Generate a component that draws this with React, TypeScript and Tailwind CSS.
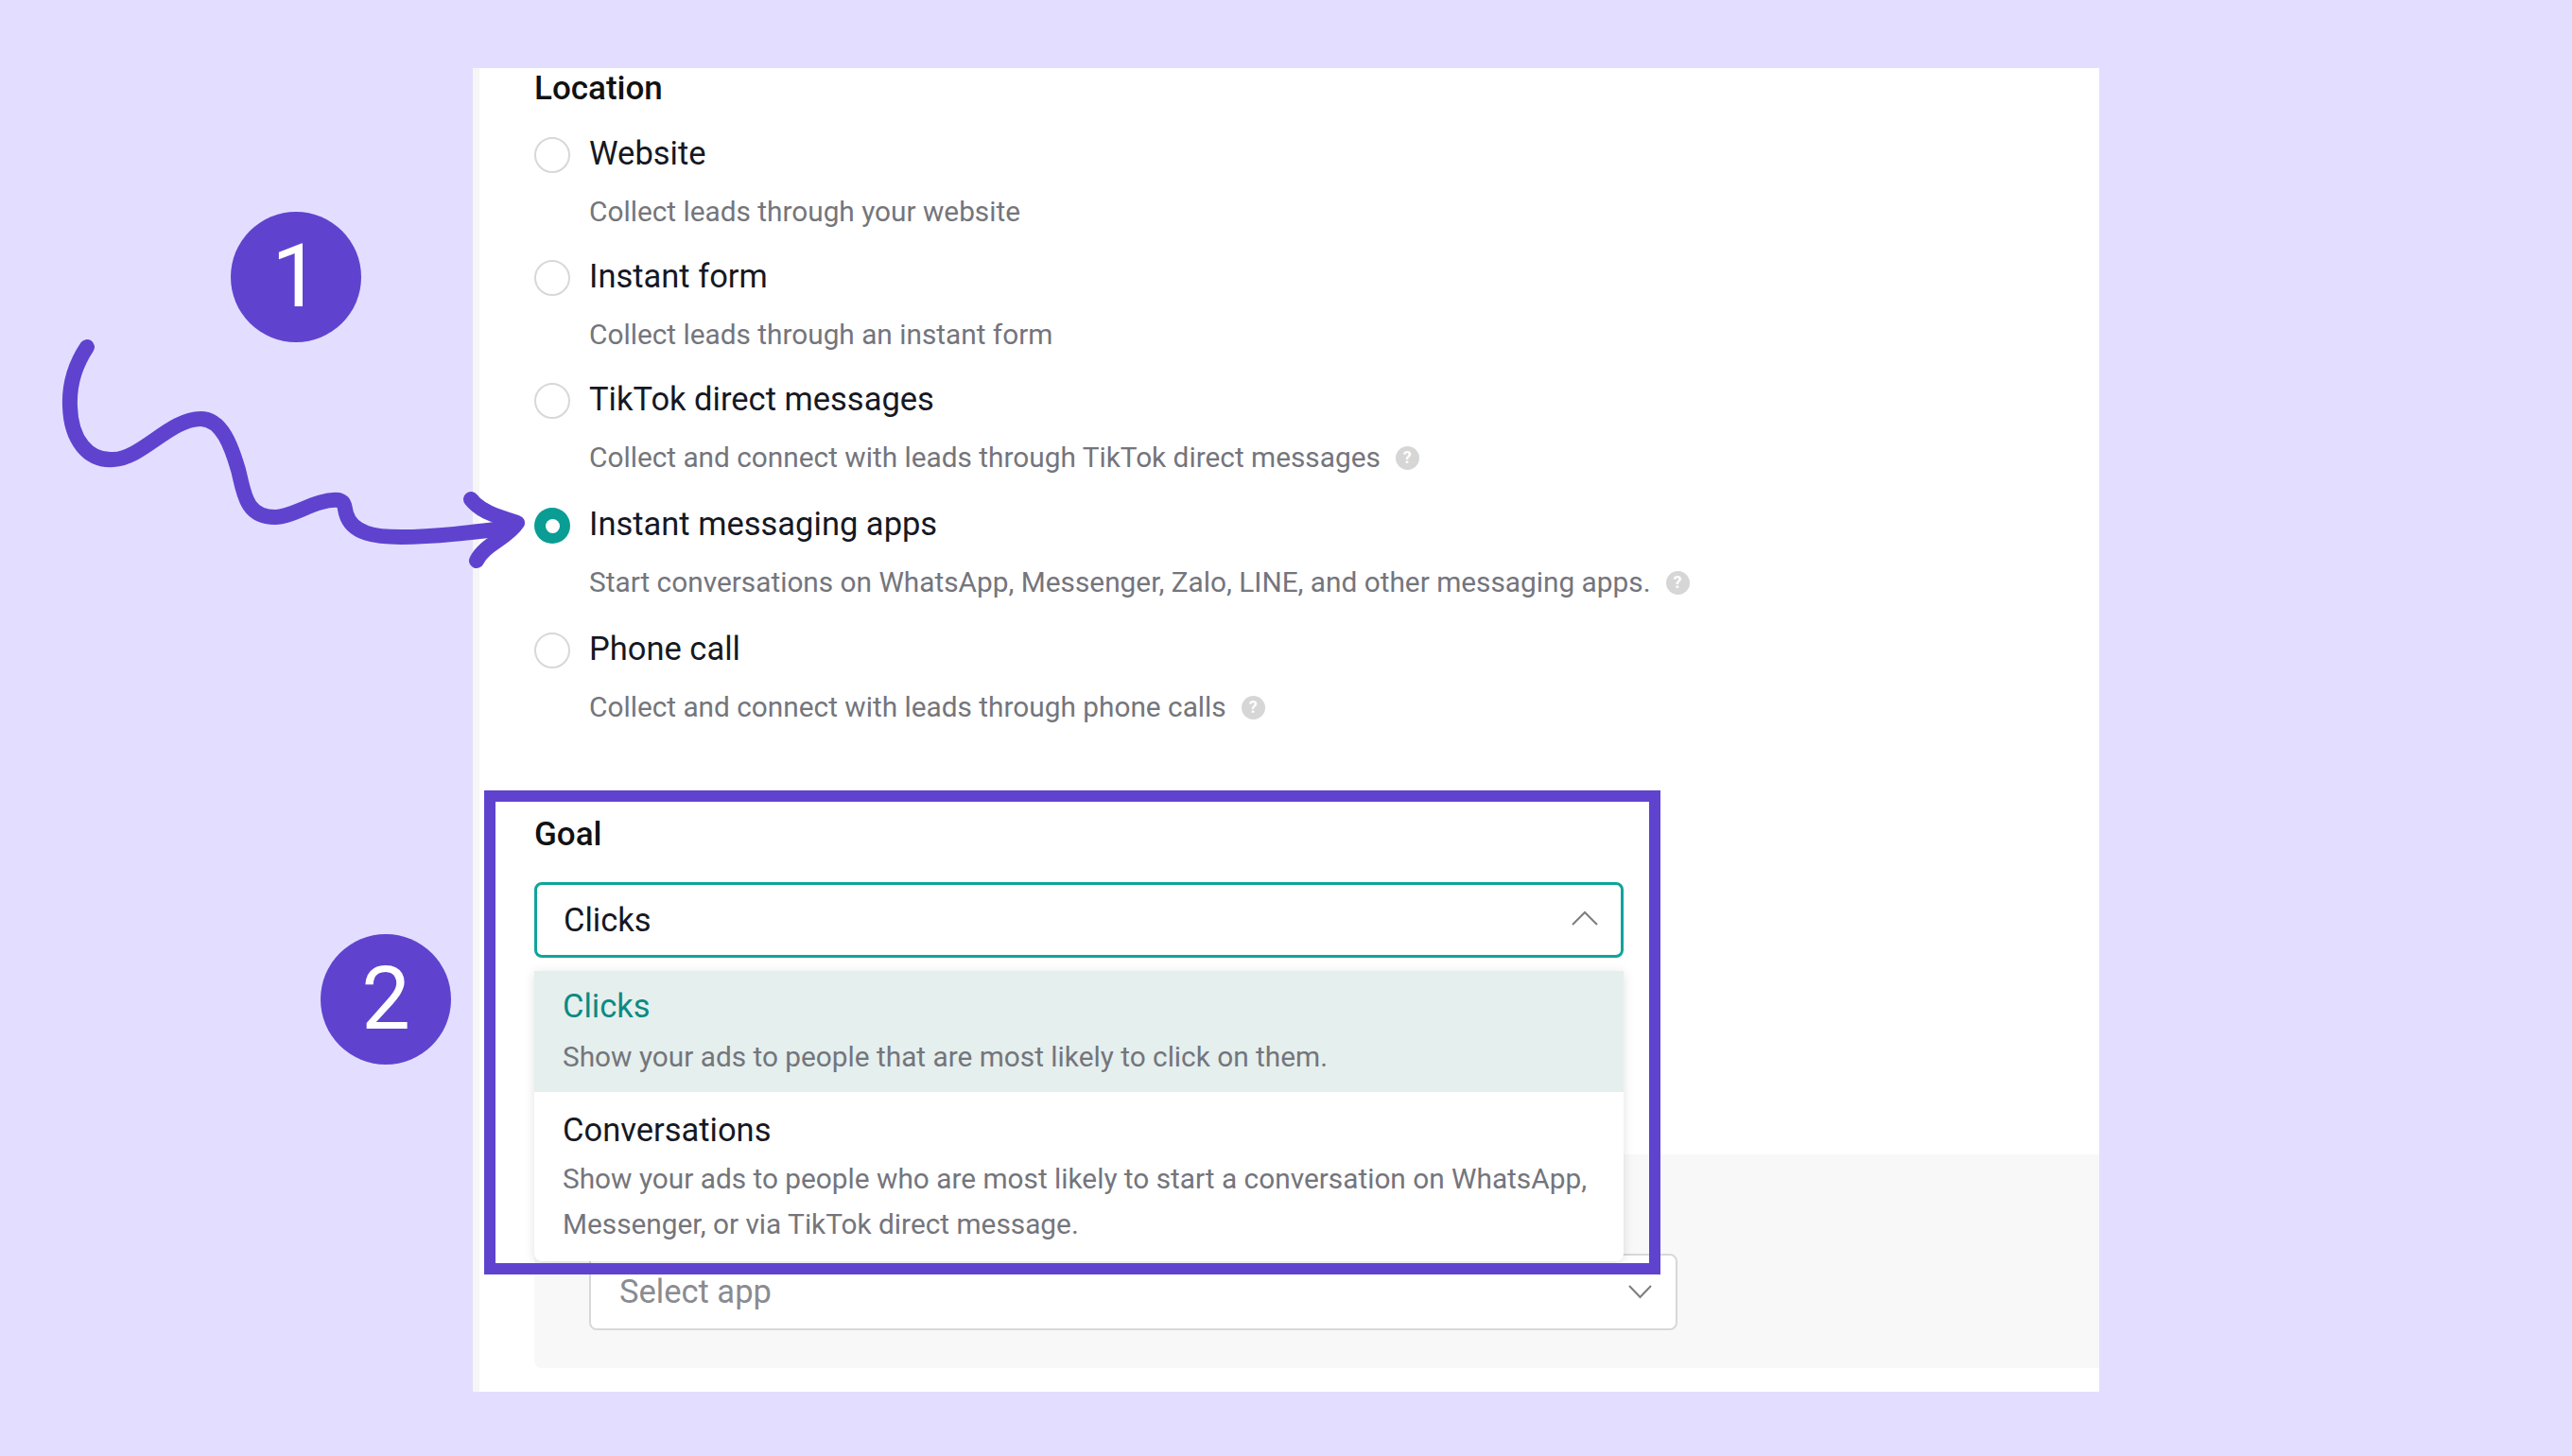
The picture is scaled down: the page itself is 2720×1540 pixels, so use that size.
const locations = [
  { label: "Website", hint: "Collect leads through your website", height: "h-[130px]" },
  { label: "Instant form", hint: "Collect leads through an instant form", height: "h-[130px]" },
  { label: "TikTok direct messages", hint: "Collect and connect with leads through TikTok direct messages", help: true, height: "h-[132px]" },
  { label: "Instant messaging apps", hint: "Start conversations on WhatsApp, Messenger, Zalo, LINE, and other messaging apps.", help: true, checked: true, height: "h-[132px]" },
  { label: "Phone call", hint: "Collect and connect with leads through phone calls", help: true, height: "h-[132px]" },
];

function HelpIcon() {
  return (
    <span className="ml-4 flex h-[25px] w-[25px] items-center justify-center rounded-full bg-[#d6d6d6] text-[18px] font-bold leading-none text-white">
      ?
    </span>
  );
}

function Radio({ checked }: { checked?: boolean }) {
  if (checked) {
    return (
      <span className="flex h-[38px] w-[38px] shrink-0 items-center justify-center rounded-full bg-[#0a9d94]">
        <span className="h-[15px] w-[15px] rounded-full bg-white" />
      </span>
    );
  }
  return <span className="h-[38px] w-[38px] shrink-0 rounded-full border-2 border-[#d8d8d8] bg-white" />;
}

function ChevronUp() {
  return (
    <svg className="mb-[5px]" width="28" height="16" viewBox="0 0 28 16" fill="none" stroke="#7d7d7d" strokeWidth="2">
      <polyline points="1,15 14,2 27,15" />
    </svg>
  );
}

function ChevronDown() {
  return (
    <svg className="mb-[1px]" width="25" height="15" viewBox="0 0 25 15" fill="none" stroke="#7d7d7d" strokeWidth="2">
      <polyline points="1,1 12.5,13 24,1" />
    </svg>
  );
}

function Badge({ n, className }: { n: string; className: string }) {
  return (
    <div className={`absolute flex h-[138px] w-[138px] items-center justify-center rounded-full bg-[#5f43cf] text-[92px] font-normal leading-none text-white ${className}`}>
      {n}
    </div>
  );
}

export default function App() {
  return (
    <div className="relative h-[1540px] w-[2720px] overflow-hidden bg-[#e3deff] pl-[500px] pt-[72px] font-['Roboto',sans-serif]">
      <div className="h-[1400px] w-[1720px] border-l-[7px] border-[#f6f6f6] bg-white pl-[58px]">
        <div className="flex h-[73px] items-center pb-[39px] pt-[8px] text-[35px] font-medium leading-none text-[#111]">Location</div>

        {locations.map((item) => (
          <div key={item.label} className={item.height}>
            <div className="flex h-[38px] items-center">
              <Radio checked={item.checked} />
              <span className="mb-[3px] ml-[20px] text-[34.5px] leading-none text-[#161823]">{item.label}</span>
            </div>
            <div className="mt-[22px] ml-[58px] flex h-[38px] items-center text-[29.8px] leading-none text-[#74757c]">
              {item.hint}
              {item.help && <HelpIcon />}
            </div>
          </div>
        ))}

        <div className="mt-[57px] flex h-[48px] items-center text-[35px] font-medium leading-none text-[#111]">Goal</div>

        <div className="relative mt-[27px] w-[1152px]">
          <div className="flex h-[80px] items-center justify-between rounded-lg border-[3px] border-[#0ea49b] bg-white pl-[28px] pr-[24px]">
            <span className="text-[34.5px] leading-none text-[#161823]">Clicks</span>
            <ChevronUp />
          </div>

          <div className="absolute left-0 top-[94px] z-10 h-[307px] w-full overflow-hidden rounded-b-lg bg-white shadow-[0_2px_12px_rgba(0,0,0,0.12)]">
            <div className="h-[128px] bg-[#e5efed] px-[30px] pt-[19px]">
              <div className="text-[34.5px] leading-[36px] text-[#0a8a84]">Clicks</div>
              <div className="mt-[18px] text-[29.8px] leading-[36px] text-[#74757c]">Show your ads to people that are most likely to click on them.</div>
            </div>
            <div className="px-[30px] pt-[22px]">
              <div className="text-[34.5px] leading-[36px] text-[#161823]">Conversations</div>
              <div className="mt-[10px] text-[29.8px] leading-[48px] text-[#74757c]">
                Show your ads to people who are most likely to start a conversation on WhatsApp,
                <br />
                Messenger, or via TikTok direct message.
              </div>
            </div>
          </div>
        </div>

        <div className="mt-[208px] flex h-[226px] items-end rounded-l-lg bg-[#f8f8f8] pb-[40px] pl-[58px]">
          <div className="flex h-[81px] w-[1151px] items-center justify-between rounded-lg border-2 border-[#d8d8d8] bg-white pl-[30px] pr-[25px]">
            <span className="text-[34.5px] leading-none text-[#8a8b91]">Select app</span>
            <ChevronDown />
          </div>
        </div>
      </div>

      {/* annotations on top of the screenshot */}
      <Badge n="1" className="left-[244px] top-[224px]" />
      <Badge n="2" className="left-[339px] top-[988px]" />

      <svg className="absolute left-0 top-0" width="600" height="640" viewBox="0 0 600 640" fill="none" stroke="#5f43cf" strokeWidth="16" strokeLinecap="round" strokeLinejoin="round">
        <path d="M92 367C78 388 73 408 74 430C75 465 93 488 120 486C150 485 180 443 212 443C235 443 245 473 252 497C258 520 259 547 291 547C310 547 335 527 358 529C365 531 364 535 366 543C372 565 398 568 424 568C460 568 500 563 540 558" />
        <path d="M498 528C508 541 525 546 547 553C536 570 513 575 504 593" />
      </svg>

      <div className="absolute left-[512px] top-[836px] z-20 h-[512px] w-[1244px] border-[12px] border-[#5f43cf]" />
    </div>
  );
}
